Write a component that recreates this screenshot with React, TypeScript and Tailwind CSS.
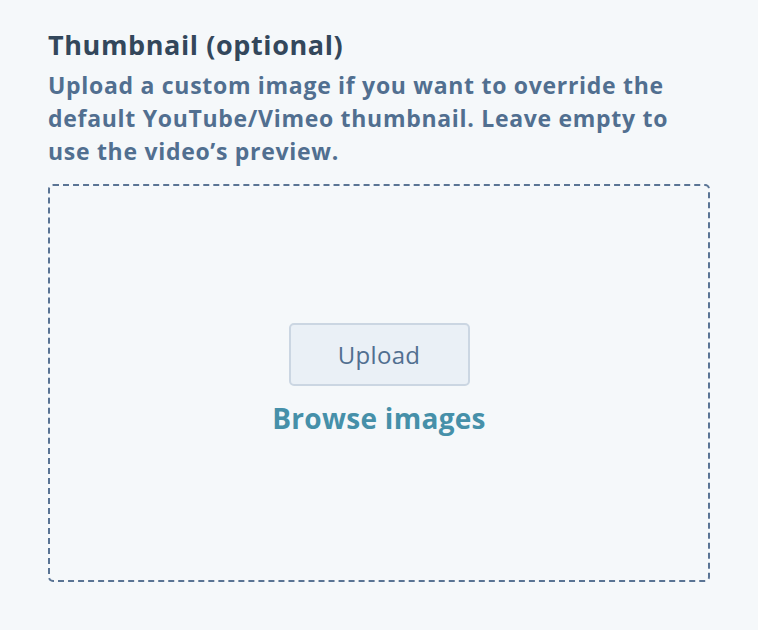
import React from 'react';

const font = { fontFamily: '"Open Sans", "Noto Sans", sans-serif' };

const ThumbnailField: React.FC = () => {
    return (
        <div className="px-[48px] pt-[28px]">
            <h2 className="text-[27px] leading-[34px] font-bold tracking-[0.6px] text-[#33475b]">
                Thumbnail (optional)
            </h2>
            <p className="mt-[7px] text-[23px] leading-[33px] font-bold tracking-[0.7px] text-[#516f90] whitespace-nowrap">
                Upload a custom image if you want to override the
                <br />
                default YouTube/Vimeo thumbnail. Leave empty to
                <br />
                use the video’s preview.
            </p>

            <div className="mt-[16px] h-[398px] rounded-[5px] border-2 border-dashed border-[#5a7494] flex flex-col items-center justify-center gap-[14px] pb-[7px]">
                <button className="w-[181px] h-[63px] rounded-[5px] border-2 border-[#cbd6e2] bg-[#eaf0f6] text-[24px] tracking-[0.3px] text-[#516f90]">
                    Upload
                </button>
                <a className="text-[28px] leading-[36px] font-bold tracking-[0.3px] text-[#4690a9] cursor-pointer">
                    Browse images
                </a>
            </div>
        </div>
    );
};

export default function App() {
    return (
        <div className="min-h-[630px] w-[758px] bg-[#f5f8fa]" style={font}>
            <ThumbnailField />
        </div>
    );
}
